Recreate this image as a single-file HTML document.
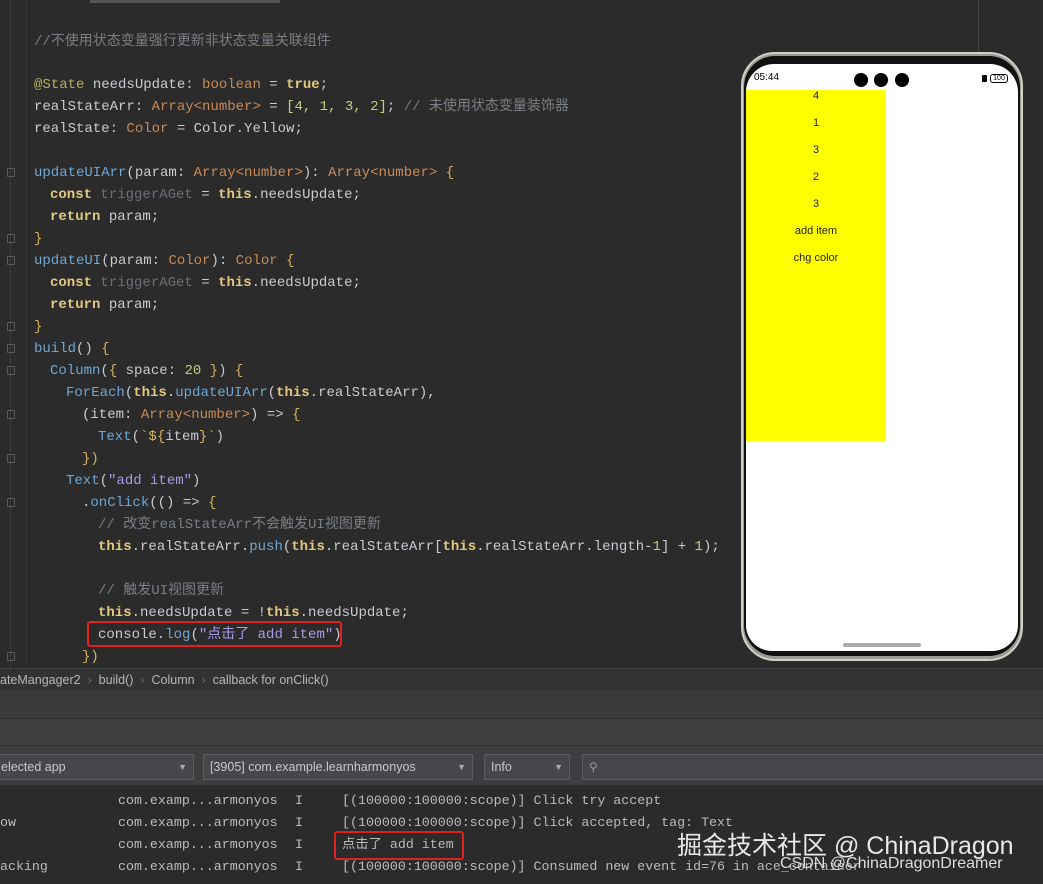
<!DOCTYPE html>
<html><head><meta charset="utf-8"><style>
*{margin:0;padding:0;box-sizing:border-box}
body{width:1043px;height:884px;overflow:hidden;background:#2b2b2b;position:relative;font-family:"Liberation Mono","Noto Sans CJK SC",monospace}
.code{position:absolute;left:0;top:0;width:1043px;height:668px;background:#2b2b2b}
.l{position:absolute;font-size:14px;white-space:pre;color:#c9cbd0;line-height:18px}
.k{color:#e3c97d;font-weight:bold}.t{color:#c98a55}.f{color:#6ea7d6}.s{color:#a99be8}.n{color:#c1cf7a}.c{color:#7a7e85}.g{color:#6b6f76}.a{color:#b3ae60}.y{color:#d9b25c}
.gut{position:absolute;left:10px;top:0;width:1px;height:668px;background:#3c3c3c}
.fold{position:absolute;left:7px;width:8px;height:9px;border:1px solid #5a5a5a;border-radius:1px}
.sans{font-family:"Liberation Sans","Noto Sans CJK SC",sans-serif}
.lg{position:absolute;font-size:13.3px;white-space:pre;color:#bbb;line-height:18px}
</style></head><body>
<div class="code">
<div style="position:absolute;left:90px;top:0;width:190px;height:3px;background:#555"></div>
<div class="gut"></div>
<div style="position:absolute;left:26px;top:0;width:1px;height:668px;background:#353535"></div>
<div style="position:absolute;left:978px;top:0;width:1px;height:60px;background:#444"></div>
<div class="l c" style="left:34px;top:33px">//不使用状态变量强行更新非状态变量关联组件</div>
<div class="l" style="left:34px;top:76px"><span class="a">@State</span> needsUpdate: <span class="t">boolean</span> = <span class="k">true</span>;</div>
<div class="l" style="left:34px;top:98px">realStateArr: <span class="t">Array&lt;number&gt;</span> = <span class="n">[4, 1, 3, 2]</span>; <span class="c">// 未使用状态变量装饰器</span></div>
<div class="l" style="left:34px;top:120px">realState: <span class="t">Color</span> = Color.Yellow;</div>
<div class="l" style="left:34px;top:164px"><span class="f">updateUIArr</span>(param: <span class="t">Array&lt;number&gt;</span>): <span class="t">Array&lt;number&gt;</span> <span class="y">{</span></div>
<div class="l" style="left:50px;top:186px"><span class="k">const</span> <span class="g">triggerAGet</span> = <span class="k">this</span>.needsUpdate;</div>
<div class="l" style="left:50px;top:208px"><span class="k">return</span> param;</div>
<div class="l y" style="left:34px;top:230px">}</div>
<div class="l" style="left:34px;top:252px"><span class="f">updateUI</span>(param: <span class="t">Color</span>): <span class="t">Color</span> <span class="y">{</span></div>
<div class="l" style="left:50px;top:274px"><span class="k">const</span> <span class="g">triggerAGet</span> = <span class="k">this</span>.needsUpdate;</div>
<div class="l" style="left:50px;top:296px"><span class="k">return</span> param;</div>
<div class="l y" style="left:34px;top:318px">}</div>
<div class="l" style="left:34px;top:340px"><span class="f">build</span>() <span class="y">{</span></div>
<div class="l" style="left:50px;top:362px"><span class="f">Column</span>(<span class="y">{</span> space: <span class="n">20</span> <span class="y">}</span>) <span class="y">{</span></div>
<div class="l" style="left:66px;top:384px"><span class="f">ForEach</span>(<span class="k">this</span>.<span class="f">updateUIArr</span>(<span class="k">this</span>.realStateArr),</div>
<div class="l" style="left:82px;top:406px">(item: <span class="t">Array&lt;number&gt;</span>) =&gt; <span class="y">{</span></div>
<div class="l" style="left:98px;top:428px"><span class="f">Text</span>(<span class="y">`${</span>item<span class="y">}`</span>)</div>
<div class="l y" style="left:82px;top:450px">})</div>
<div class="l" style="left:66px;top:472px"><span class="f">Text</span>(<span class="s">"add item"</span>)</div>
<div class="l" style="left:82px;top:494px">.<span class="f">onClick</span>(() =&gt; <span class="y">{</span></div>
<div class="l c" style="left:98px;top:516px">// 改变realStateArr不会触发UI视图更新</div>
<div class="l" style="left:98px;top:538px"><span class="k">this</span>.realStateArr.<span class="f">push</span>(<span class="k">this</span>.realStateArr[<span class="k">this</span>.realStateArr.length-<span class="n">1</span>] + <span class="n">1</span>);</div>
<div class="l c" style="left:98px;top:582px">// 触发UI视图更新</div>
<div class="l" style="left:98px;top:604px"><span class="k">this</span>.needsUpdate = !<span class="k">this</span>.needsUpdate;</div>
<div class="l" style="left:98px;top:626px">console.<span class="f">log</span>(<span class="s">"点击了 add item"</span>)</div>
<div style="position:absolute;left:87px;top:621px;width:255px;height:26px;border:2px solid #e02020;border-radius:3px"></div>
<div class="l y" style="left:82px;top:648px">})</div>
<div class="fold" style="top:168px"></div><div class="fold" style="top:234px"></div><div class="fold" style="top:256px"></div><div class="fold" style="top:322px"></div><div class="fold" style="top:344px"></div><div class="fold" style="top:366px"></div><div class="fold" style="top:410px"></div><div class="fold" style="top:454px"></div><div class="fold" style="top:498px"></div><div class="fold" style="top:652px"></div>
<!-- phone -->
<div style="position:absolute;left:741px;top:52px;width:282px;height:609px;border-radius:34px;background:#9a9a92;border:2px solid #d0d0c8"></div>
<div style="position:absolute;left:744px;top:56px;width:276px;height:600px;border-radius:31px;background:#111"></div>
<div style="position:absolute;left:746px;top:64px;width:272px;height:587px;border-radius:28px 28px 26px 26px;background:#fff;overflow:hidden">
 <div class="sans" style="position:absolute;left:8px;top:8px;font-size:10px;color:#000">05:44</div>
 <div style="position:absolute;left:108px;top:9px;width:14px;height:14px;border-radius:50%;background:#000"></div>
 <div style="position:absolute;left:128px;top:9px;width:14px;height:14px;border-radius:50%;background:#000"></div>
 <div style="position:absolute;left:149px;top:9px;width:14px;height:14px;border-radius:50%;background:#000"></div>
 <div style="position:absolute;left:236px;top:11px;width:5px;height:7px;background:#000;border-radius:1px"></div>
 <div class="sans" style="position:absolute;left:244px;top:10px;width:18px;height:9px;border:1px solid #000;border-radius:3px;font-size:7px;line-height:7px;text-align:center;color:#000">100</div>
 <div class="sans" style="position:absolute;left:0;top:26px;width:140px;height:351px;background:#ffff00;font-size:11px;color:#222;text-align:center">
  <div style="position:absolute;top:0;width:140px">4</div>
  <div style="position:absolute;top:27px;width:140px">1</div>
  <div style="position:absolute;top:54px;width:140px">3</div>
  <div style="position:absolute;top:81px;width:140px">2</div>
  <div style="position:absolute;top:108px;width:140px">3</div>
  <div style="position:absolute;top:135px;width:140px">add item</div>
  <div style="position:absolute;top:162px;width:140px">chg color</div>
 </div>
 <div style="position:absolute;left:97px;top:579px;width:78px;height:4px;border-radius:2px;background:#aaa"></div>
</div>
</div>
<!-- breadcrumb -->
<div class="sans" style="position:absolute;left:0;top:668px;width:1043px;height:22px;background:#313234;border-top:1px solid #3e3e3e;color:#b5b7ba;font-size:12.5px;line-height:22px;white-space:pre">ateMangager2  <span style="color:#666">›</span>  build()  <span style="color:#666">›</span>  Column  <span style="color:#666">›</span>  callback for onClick()</div>
<div style="position:absolute;left:0;top:690px;width:1043px;height:28px;background:#393a3c"></div>
<div style="position:absolute;left:0;top:718px;width:1043px;height:1px;background:#2b2b2b"></div>
<div style="position:absolute;left:0;top:719px;width:1043px;height:66px;background:#3c3e40"></div>
<div style="position:absolute;left:0;top:745px;width:1043px;height:1px;background:#2e2e2e"></div>
<div class="sans" style="position:absolute;left:-2px;top:754px;width:196px;height:26px;border:1px solid #5a5c5e;background:#45474a;color:#c8c8c8;font-size:12.5px;line-height:24px;padding-left:2px">elected app<span style="position:absolute;right:6px;font-size:9px;color:#aaa">▼</span></div>
<div class="sans" style="position:absolute;left:203px;top:754px;width:270px;height:26px;border:1px solid #5a5c5e;background:#45474a;color:#c8c8c8;font-size:12.5px;line-height:24px;padding-left:6px">[3905] com.example.learnharmonyos<span style="position:absolute;right:6px;font-size:9px;color:#aaa">▼</span></div>
<div class="sans" style="position:absolute;left:484px;top:754px;width:86px;height:26px;border:1px solid #5a5c5e;background:#45474a;color:#c8c8c8;font-size:12.5px;line-height:24px;padding-left:6px">Info<span style="position:absolute;right:6px;font-size:9px;color:#aaa">▼</span></div>
<div class="sans" style="position:absolute;left:582px;top:754px;width:470px;height:26px;border:1px solid #5a5c5e;background:#45474a;color:#999;font-size:12px;line-height:24px;padding-left:6px">⚲</div>
<div style="position:absolute;left:0;top:785px;width:1043px;height:99px;background:#2b2b2b"></div>
<div class="lg" style="left:0;top:814px">ow</div>
<div class="lg" style="left:0;top:858px">acking</div>
<div class="lg" style="left:118px;top:792px">com.examp...armonyos</div>
<div class="lg" style="left:118px;top:814px">com.examp...armonyos</div>
<div class="lg" style="left:118px;top:836px">com.examp...armonyos</div>
<div class="lg" style="left:118px;top:858px">com.examp...armonyos</div>
<div class="lg" style="left:295px;top:792px">I</div><div class="lg" style="left:295px;top:814px">I</div><div class="lg" style="left:295px;top:836px">I</div><div class="lg" style="left:295px;top:858px">I</div>
<div class="lg" style="left:342px;top:792px">[(100000:100000:scope)] Click try accept</div>
<div class="lg" style="left:342px;top:814px">[(100000:100000:scope)] Click accepted, tag: Text</div>
<div class="lg" style="left:342px;top:836px">点击了 add item</div>
<div class="lg" style="left:342px;top:858px">[(100000:100000:scope)] Consumed new event id=76 in ace_container</div>
<div style="position:absolute;left:334px;top:831px;width:130px;height:29px;border:2px solid #e02020;border-radius:3px"></div>
<div class="sans" style="position:absolute;left:677px;top:826px;font-size:25px;color:#e8e8e8;white-space:nowrap">掘金技术社区 @ ChinaDragon</div>
<div class="sans" style="position:absolute;left:780px;top:855px;font-size:16px;color:#dcdcdc;white-space:nowrap">CSDN @ChinaDragonDreamer</div>
</body></html>
